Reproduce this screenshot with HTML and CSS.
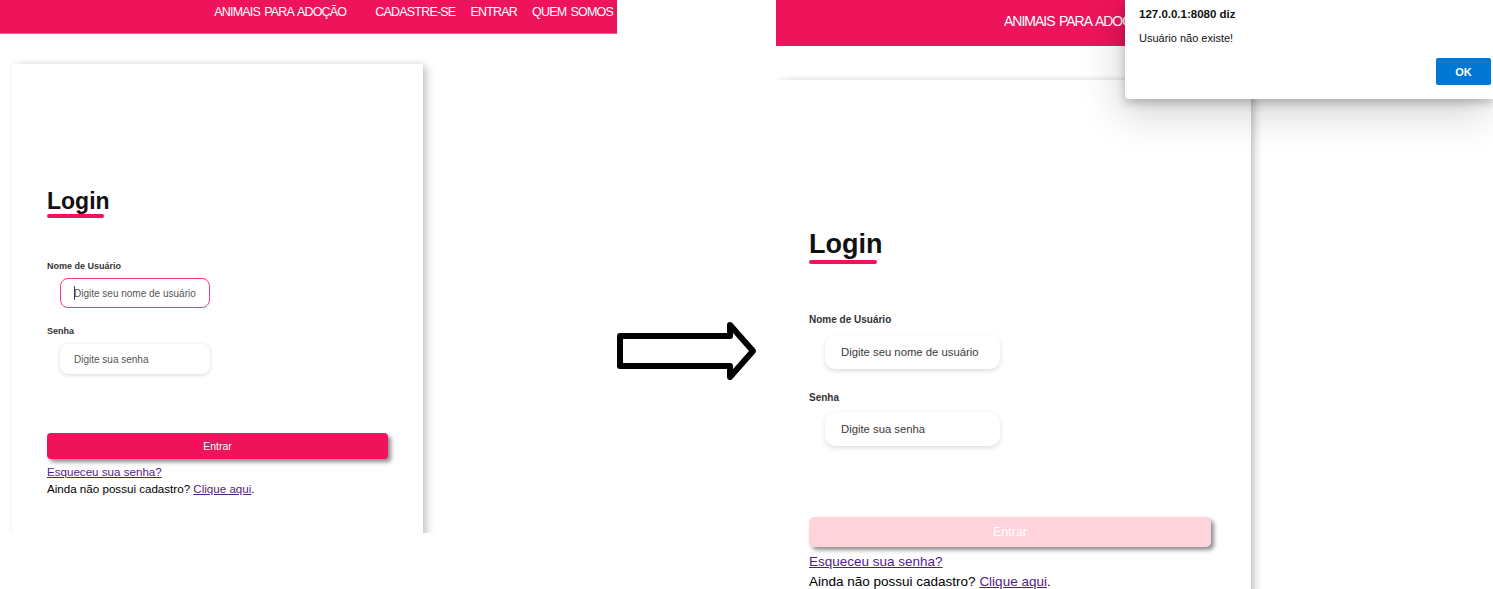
FILE: index.html
```html
<!DOCTYPE html>
<html lang="pt-BR">
<head>
<meta charset="utf-8">
<title>Login</title>
<link rel="stylesheet" href="styles.css">
</head>
<body>
<div class="canvas">
  <section class="shot shot-a">
    <header class="nav">
      <nav class="nav-track">
        <a class="nav-link nav-first" href="#">ANIMAIS PARA ADOÇÃO</a>
        <a class="nav-link" href="#">CADASTRE-SE</a>
        <a class="nav-link" href="#">ENTRAR</a>
        <a class="nav-link" href="#">QUEM SOMOS</a>
      </nav>
    </header>
    <main class="card">
      <h2 class="title">Login</h2>
      <form class="form">
        <label class="label label-user">Nome de Usuário</label>
        <div class="field-wrap">
          <input class="field field-focus" type="text" placeholder="Digite seu nome de usuário">
          <span class="caret"></span>
        </div>
        <label class="label label-pass">Senha</label>
        <div class="field-wrap field-wrap-pass">
          <input class="field" type="password" placeholder="Digite sua senha">
        </div>
        <button class="submit" type="button">Entrar</button>
      </form>
      <a class="link forgot" href="#">Esqueceu sua senha?</a>
      <p class="signup">Ainda não possui cadastro? <a class="link" href="#">Clique aqui</a>.</p>
    </main>
  </section>

  <div class="arrow-col">
    <svg class="arrow" width="143" height="66" viewBox="0 0 143 66" aria-hidden="true">
      <path d="M3 18 H113 V7 L136 33 L113 59 V48 H3 Z" fill="#fff" stroke="#000" stroke-width="6" stroke-linejoin="round"/>
    </svg>
  </div>

  <section class="shot shot-b">
    <header class="nav">
      <nav class="nav-track">
        <a class="nav-link nav-first" href="#">ANIMAIS PARA ADOÇÃO</a>
        <a class="nav-link" href="#">CADASTRE-SE</a>
        <a class="nav-link" href="#">ENTRAR</a>
        <a class="nav-link" href="#">QUEM SOMOS</a>
      </nav>
    </header>
    <main class="card">
      <h2 class="title">Login</h2>
      <form class="form">
        <label class="label label-user">Nome de Usuário</label>
        <div class="field-wrap">
          <input class="field" type="text" placeholder="Digite seu nome de usuário">
        </div>
        <label class="label label-pass">Senha</label>
        <div class="field-wrap field-wrap-pass">
          <input class="field" type="password" placeholder="Digite sua senha">
        </div>
        <button class="submit submit-disabled" type="button">Entrar</button>
      </form>
      <a class="link forgot" href="#">Esqueceu sua senha?</a>
      <p class="signup">Ainda não possui cadastro? <a class="link" href="#">Clique aqui</a>.</p>
    </main>
    <div class="dialog" role="alertdialog">
      <div class="dialog-title">127.0.0.1:8080 diz</div>
      <div class="dialog-msg">Usuário não existe!</div>
      <div class="dialog-actions"><button class="dialog-ok" type="button">OK</button></div>
    </div>
  </section>
</div>
</body>
</html>
```

FILE: styles.css
```css
html, body {
  margin: 0;
  padding: 0;
  background: #fff;
}

body {
  font-family: "Liberation Sans", Arial, sans-serif;
  overflow: hidden;
}

.canvas {
  display: flex;
  align-items: flex-start;
  width: 1493px;
  height: 589px;
}

.shot {
  position: relative;
  overflow: hidden;
  background: #fff;
  flex: none;
}

.shot-a {
  width: 617px;
  height: 533px;
}

.shot-b {
  width: 717px;
  height: 589px;
}

/* ---------- nav ---------- */
.nav {
  box-sizing: border-box;
  display: flex;
  background: #ED145B;
}

.nav-track {
  display: flex;
  align-items: flex-start;
}

.nav-link {
  color: #fff;
  text-decoration: none;
  white-space: nowrap;
  flex: none;
}

.shot-a .nav {
  height: 34px;
  justify-content: flex-end;
  padding: 5px 4px 0 0;
  border-bottom: 1px solid #F25C8C;
}

.shot-a .nav-track {
  gap: 15px;
}

.shot-a .nav-link {
  font-size: 12.5px;
  line-height: 14px;
  letter-spacing: -0.8px;
  word-spacing: 1.5px;
}

.shot-a .nav-first {
  margin-right: 14px;
}

.shot-b .nav {
  height: 46px;
  padding: 13px 0 0 228px;
}

.shot-b .nav-track {
  width: 121px;
  overflow: hidden;
  gap: 17px;
}

.shot-b .nav-link {
  font-size: 14px;
  line-height: 16px;
  letter-spacing: -1px;
  word-spacing: 1.5px;
}

.shot-b .nav-first {
  margin-right: 16px;
}

/* ---------- card ---------- */
.card {
  display: block;
  box-sizing: border-box;
  background: #fff;
  height: 700px;
  box-shadow: 0 0 6px rgba(0, 0, 0, 0.07), 6px 0 8px -2px rgba(0, 0, 0, 0.2);
}

.shot-a .card {
  width: 411px;
  margin: 30px 0 0 12px;
  padding: 125px 35px 0 35px;
}

.shot-b .card {
  width: 475px;
  margin: 34px 0 0 0;
  padding: 149px 40px 0 33px;
}

.title {
  margin: 0;
  font-weight: bold;
  color: #111;
}

.title::after {
  content: "";
  display: block;
  height: 4px;
  border-radius: 2px;
  background: #ED145B;
}

.shot-a .title {
  font-size: 23px;
  line-height: 25px;
}

.shot-a .title::after {
  width: 57px;
}

.shot-b .title {
  font-size: 27px;
  line-height: 31px;
}

.shot-b .title::after {
  width: 68px;
  margin-top: 0;
}

/* ---------- form ---------- */
.form {
  margin: 0;
}

.label {
  display: block;
  font-weight: bold;
  color: #333;
}

.shot-a .label {
  font-size: 9px;
  line-height: 11px;
}

.shot-a .label-user { margin-top: 43px; }
.shot-a .label-pass { margin-top: 18px; }

.shot-b .label {
  font-size: 10px;
  line-height: 12px;
}

.shot-b .label-user { margin-top: 50px; }
.shot-b .label-pass { margin-top: 23px; }

.field-wrap {
  position: relative;
  width: max-content;
}

.shot-a .field-wrap {
  margin: 6px 0 0 13px;
}

.shot-a .field-wrap-pass {
  margin-top: 7px;
}

.shot-b .field-wrap {
  margin: 9px 0 0 16px;
}

.shot-b .field-wrap-pass {
  margin-top: 8px;
}

.field {
  display: block;
  box-sizing: border-box;
  border: 1px solid transparent;
  background: #fff;
  outline: none;
  font-family: "Liberation Sans", Arial, sans-serif;
  color: #333;
  box-shadow: 0 1px 4px rgba(0, 0, 0, 0.16);
}

.field::placeholder {
  color: #555;
  opacity: 1;
}

.shot-a .field {
  width: 150px;
  height: 30px;
  border-radius: 8px;
  padding: 0 13px;
  font-size: 10px;
}

.shot-a .field-focus {
  border-color: #EE3D77;
  box-shadow: none;
}

.caret {
  position: absolute;
  left: 14px;
  top: 8px;
  width: 1px;
  height: 14px;
  background: #444;
}

.shot-b .field {
  width: 175px;
  height: 34px;
  border-radius: 10px;
  padding: 0 15px;
  font-size: 11.3px;
  box-shadow: 0 2px 5px rgba(0, 0, 0, 0.14);
}

.shot-b .field::placeholder {
  color: #3a3a3a;
}

.submit {
  display: block;
  border: none;
  color: #fff;
  background: #ED145B;
  font-family: "Liberation Sans", Arial, sans-serif;
  cursor: pointer;
  box-shadow: 3px 3px 4px rgba(0, 0, 0, 0.45);
}

.shot-a .submit {
  width: 341px;
  height: 26px;
  margin-top: 59px;
  border-radius: 4px;
  font-size: 10.5px;
}

.shot-b .submit {
  width: 402px;
  height: 30px;
  margin-top: 71px;
  border-radius: 5px;
  font-size: 12.5px;
}

.submit-disabled {
  background: #FFD3DC;
  color: #fff;
}

/* ---------- links ---------- */
.link {
  color: #551A8B;
  text-decoration: underline;
}

.forgot {
  display: block;
}

.signup {
  margin: 0;
  color: #000;
}

.shot-a .forgot,
.shot-a .signup {
  font-size: 11.6px;
  line-height: 17px;
}

.shot-a .forgot {
  margin-top: 4px;
}

.shot-b .forgot,
.shot-b .signup {
  font-size: 13.5px;
  line-height: 19.5px;
}

.shot-b .forgot {
  margin-top: 5px;
}

/* ---------- arrow ---------- */
.arrow-col {
  width: 159px;
  flex: none;
  padding-top: 318px;
}

.arrow {
  display: block;
}

/* ---------- dialog ---------- */
.dialog {
  position: absolute;
  top: 0;
  left: 349px;
  width: 368px;
  height: 99px;
  box-sizing: border-box;
  padding: 7px 0 0 14px;
  background: #fff;
  border-radius: 0 0 0 4px;
  box-shadow: 0 4px 10px rgba(0, 0, 0, 0.22), -4px 14px 40px rgba(0, 0, 0, 0.18);
  z-index: 2;
}

.dialog-title {
  font-size: 11.5px;
  line-height: 14px;
  font-weight: bold;
  color: #111;
}

.dialog-msg {
  margin-top: 10px;
  font-size: 11px;
  line-height: 14px;
  color: #111;
}

.dialog-actions {
  display: flex;
  justify-content: flex-end;
  margin-top: 13px;
  padding-right: 2px;
}

.dialog-ok {
  width: 55px;
  height: 27px;
  border: none;
  border-radius: 2px;
  background: #0078D4;
  color: #fff;
  font-family: "Liberation Sans", Arial, sans-serif;
  font-size: 11px;
  font-weight: bold;
}
```
